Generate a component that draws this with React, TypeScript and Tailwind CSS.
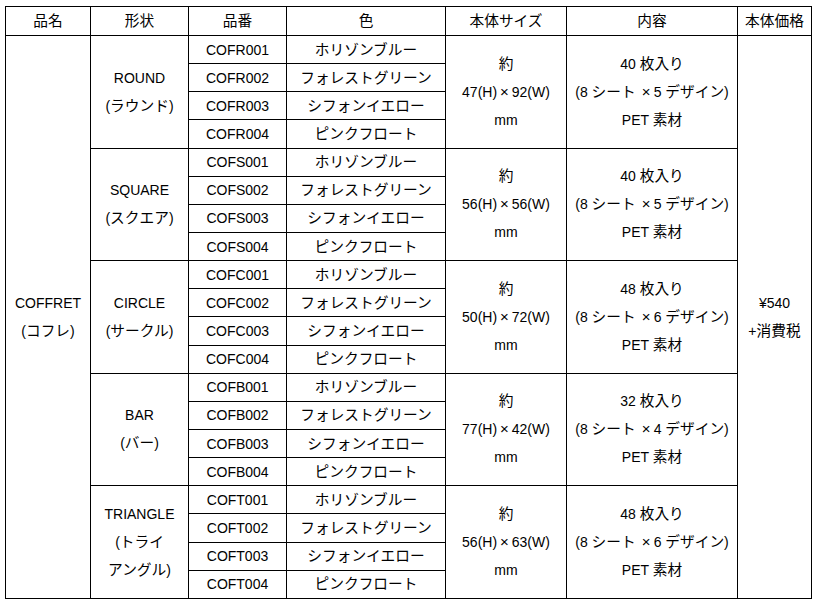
import type { ReactNode } from 'react'

const colors = ['ホリゾンブルー', 'フォレストグリーン', 'シフォンイエロー', 'ピンクフロート']

// Japanese text sits a touch larger than the Latin, like the source sheet
function J({ children }: { children: ReactNode }) {
  return <span className="text-[14.7px]">{children}</span>
}

function X({ wide = false }: { wide?: boolean }) {
  return (
    <span className={`inline-block text-center text-[15px] ${wide ? 'w-[18px] pl-[3px]' : 'w-[14.7px]'}`}>×</span>
  )
}

const shapes = [
  { code: 'COFR', name: 'ROUND', kana: ['ラウンド'], h: '47', w: '92', count: '40', sheets: '5' },
  { code: 'COFS', name: 'SQUARE', kana: ['スクエア'], h: '56', w: '56', count: '40', sheets: '5' },
  { code: 'COFC', name: 'CIRCLE', kana: ['サークル'], h: '50', w: '72', count: '48', sheets: '6' },
  { code: 'COFB', name: 'BAR', kana: ['バー'], h: '77', w: '42', count: '32', sheets: '4' },
  { code: 'COFT', name: 'TRIANGLE', kana: ['トライ', 'アングル'], h: '56', w: '63', count: '48', sheets: '6' },
]

const cell = 'border border-black text-center align-middle p-0'

export default function App() {
  return (
    <div className="bg-white w-[818px] h-[605px] pt-[6px] pl-[5px] text-black text-[14px] leading-[28px] [font-family:'Liberation_Sans','Noto_Sans_CJK_JP',sans-serif]">
      <table className="border-collapse table-fixed w-[806px]">
        <colgroup>
          <col className="w-[85px]" />
          <col className="w-[98px]" />
          <col className="w-[98px]" />
          <col className="w-[159px]" />
          <col className="w-[121px]" />
          <col className="w-[171px]" />
          <col className="w-[74px]" />
        </colgroup>
        <thead>
          <tr className="h-[28px]">
            {['品名', '形状', '品番', '色', '本体サイズ', '内容', '本体価格'].map((h) => (
              <th key={h} className={`${cell} font-normal`}>
                <J>{h}</J>
              </th>
            ))}
          </tr>
        </thead>
        <tbody>
          {shapes.map((s, si) =>
            colors.map((c, ci) => (
              <tr key={`${s.code}${ci}`} className="h-[28.15px]">
                {si === 0 && ci === 0 && (
                  <td rowSpan={20} className={cell}>
                    <div>COFFRET</div>
                    <div>
                      (<J>コフレ</J>)
                    </div>
                  </td>
                )}
                {ci === 0 && (
                  <td rowSpan={4} className={cell}>
                    <div>{s.name}</div>
                    {s.kana.length === 1 ? (
                      <div>
                        (<J>{s.kana[0]}</J>)
                      </div>
                    ) : (
                      <>
                        <div>
                          (<J>{s.kana[0]}</J>
                        </div>
                        <div>
                          <J>{s.kana[1]}</J>)
                        </div>
                      </>
                    )}
                  </td>
                )}
                <td className={`${cell} leading-[20px]`}>{`${s.code}00${ci + 1}`}</td>
                <td className={`${cell} leading-[20px]`}>
                  <J>{c}</J>
                </td>
                {ci === 0 && (
                  <td rowSpan={4} className={cell}>
                    <div>
                      <J>約</J>
                    </div>
                    <div>
                      {s.h}(H)
                      <X />
                      {s.w}(W)
                    </div>
                    <div>mm</div>
                  </td>
                )}
                {ci === 0 && (
                  <td rowSpan={4} className={cell}>
                    <div>
                      {s.count} <J>枚入り</J>
                    </div>
                    <div>
                      (8 <J>シート</J>
                      <X wide />
                      {s.sheets} <J>デザイン</J>)
                    </div>
                    <div>
                      PET <J>素材</J>
                    </div>
                  </td>
                )}
                {si === 0 && ci === 0 && (
                  <td rowSpan={20} className={cell}>
                    <div>¥540</div>
                    <div>
                      +<J>消費税</J>
                    </div>
                  </td>
                )}
              </tr>
            ))
          )}
        </tbody>
      </table>
    </div>
  )
}
